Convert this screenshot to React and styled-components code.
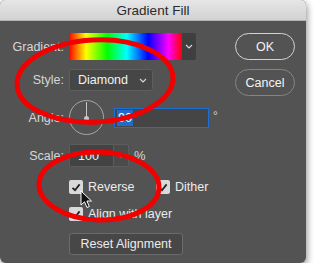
import React from 'react';
import styled, { createGlobalStyle } from 'styled-components';

const GlobalStyle = createGlobalStyle`
  body {
    margin: 0;
    background: #fff;
    font-family: "Liberation Sans", Arial, sans-serif;
  }
`;

function Chevron() {
    return (
        <svg width="8" height="5" viewBox="0 0 8 5">
            <path d="M1 1 L4 4 L7 1" fill="none" stroke="#d8d8d8" strokeWidth="1.1" />
        </svg>
    );
}

function Check() {
    return (
        <svg width="10" height="9" viewBox="0 0 10 9">
            <path d="M1.5 4.8 L4 7.2 L8.6 1.4" fill="none" stroke="#222" strokeWidth="1.8" />
        </svg>
    );
}

export default function App() {
    return (
        <>
            <GlobalStyle />
            <Window>
                <TitleBar>Gradient Fill</TitleBar>
                <Body>
                    <Form>
                        <Row $mt={12} $h={27}>
                            <Label>Gradient:</Label>
                            <GradientPicker>
                                <Swatch />
                                <ArrowPart><Chevron /></ArrowPart>
                            </GradientPicker>
                        </Row>
                        <Row $mt={9} $h={22}>
                            <Label>Style:</Label>
                            <Select>
                                <span>Diamond</span>
                                <Chevron />
                            </Select>
                        </Row>
                        <Row $mt={9} $h={35}>
                            <Label>Angle:</Label>
                            <Inline>
                                <Dial />
                                <AngleInput><Selected>90</Selected></AngleInput>
                                <Degree>°</Degree>
                            </Inline>
                        </Row>
                        <Row $mt={9} $h={23}>
                            <Label>Scale:</Label>
                            <Inline>
                                <ScaleInput>
                                    <ScaleValue>100</ScaleValue>
                                    <ScaleArrow><Chevron /></ScaleArrow>
                                </ScaleInput>
                                <Percent>%</Percent>
                            </Inline>
                        </Row>
                        <Row $mt={13} $h={14}>
                            <span />
                            <Inline>
                                <CheckItem $w={87}>
                                    <Box><Check /></Box>
                                    Reverse
                                </CheckItem>
                                <CheckItem>
                                    <Box><Check /></Box>
                                    Dither
                                </CheckItem>
                            </Inline>
                        </Row>
                        <Row $mt={13} $h={14}>
                            <span />
                            <CheckItem>
                                <Box><Check /></Box>
                                Align with layer
                            </CheckItem>
                        </Row>
                        <Row $mt={12} $h={22}>
                            <span />
                            <ResetButton>Reset Alignment</ResetButton>
                        </Row>
                    </Form>
                    <Buttons>
                        <PillButton $primary>OK</PillButton>
                        <PillButton>Cancel</PillButton>
                    </Buttons>
                </Body>

                <Marks width="306" height="263" viewBox="0 0 306 263">
                    <ellipse cx="95" cy="81" rx="78" ry="41" transform="rotate(-3 95 81)"
                        fill="none" stroke="#f20000" strokeWidth="5" />
                    <ellipse cx="99" cy="186" rx="60" ry="34" transform="rotate(2 99 186)"
                        fill="none" stroke="#f20000" strokeWidth="5" />
                </Marks>
                <Cursor width="13" height="19" viewBox="0 0 13 19">
                    <path d="M1 1 L1 15 L4.5 11.8 L7 17.5 L9.3 16.5 L6.9 11 L11.5 11 Z"
                        fill="#111" stroke="#fff" strokeWidth="1" strokeLinejoin="round" />
                </Cursor>
            </Window>
        </>
    );
}

const Window = styled.div`
    position: relative;
    width: 306px;
    height: 263px;
    background-color: #535353;
    border-radius: 5px 5px 6px 6px;
    box-shadow: 1px 3px 7px rgba(0, 0, 0, 0.45);
    overflow: hidden;
`;

const TitleBar = styled.div`
    height: 21px;
    display: flex;
    justify-content: center;
    align-items: center;
    background: linear-gradient(#e6e6e6, #d2d2d2);
    border-bottom: 1px solid #b4b4b4;
    box-sizing: border-box;
    color: #2a2a2a;
    font-size: 13.5px;
`;

const Body = styled.div`
    display: flex;
    padding-right: 11px;
`;

const Form = styled.div`
    display: flex;
    flex-direction: column;
    flex: 1;
`;

const Row = styled.div`
    display: grid;
    grid-template-columns: 64px auto;
    column-gap: 5px;
    align-items: center;
    justify-items: start;
    height: ${p => p.$h}px;
    margin-top: ${p => p.$mt}px;
`;

const Label = styled.span`
    justify-self: end;
    color: #d6d6d6;
    font-size: 12.5px;
`;

const GradientPicker = styled.div`
    display: flex;
    height: 27px;
    border-radius: 2px;
    overflow: hidden;
`;

const Swatch = styled.div`
    width: 113px;
    background: linear-gradient(to right, #f00 0%, #ff0 15%, #0f0 34%, #0ff 51%, #00f 70%, #f0f 88%, #f00 100%);
`;

const ArrowPart = styled.div`
    width: 14px;
    display: flex;
    justify-content: center;
    align-items: center;
    background-color: #3f3f3f;
`;

const Select = styled.div`
    box-sizing: border-box;
    width: 84px;
    height: 22px;
    display: flex;
    justify-content: space-between;
    align-items: center;
    padding: 0 5px 0 8px;
    background-color: #464646;
    border: 1px solid #5e5e5e;
    border-radius: 3px;
    color: #f2f2f2;
    font-size: 12.5px;
`;

const Inline = styled.div`
    display: flex;
    align-items: center;
`;

const Dial = styled.div`
    position: relative;
    box-sizing: border-box;
    width: 35px;
    height: 35px;
    border: 1px solid #a8a8a8;
    border-radius: 50%;
    &::before {
        content: '';
        position: absolute;
        left: 16px;
        top: 1px;
        width: 1px;
        height: 16px;
        background-color: #c8c8c8;
    }
    &::after {
        content: '';
        position: absolute;
        left: 14px;
        top: 15px;
        width: 5px;
        height: 5px;
        border-radius: 50%;
        background-color: #c8c8c8;
    }
`;

const AngleInput = styled.div`
    box-sizing: border-box;
    width: 95px;
    height: 20px;
    margin-left: 10px;
    padding-left: 2px;
    display: flex;
    align-items: center;
    background-color: #454545;
    border: 1px solid #1b6fd6;
`;

const Selected = styled.span`
    background-color: #1f6ccb;
    color: #fff;
    font-size: 12.5px;
    padding: 1px 1px;
    line-height: 14px;
`;

const Degree = styled.span`
    margin-left: 4px;
    margin-bottom: 3px;
    color: #d6d6d6;
    font-size: 12px;
`;

const Percent = styled.span`
    margin-left: 5px;
    color: #d6d6d6;
    font-size: 13px;
`;

const ScaleInput = styled.div`
    display: flex;
    height: 23px;
    border: 1px solid #5c5c5c;
    border-radius: 2px;
    box-sizing: border-box;
`;

const ScaleValue = styled.div`
    width: 43px;
    padding-left: 8px;
    box-sizing: border-box;
    display: flex;
    align-items: center;
    background-color: #434343;
    color: #f0f0f0;
    font-size: 12.5px;
`;

const ScaleArrow = styled.div`
    width: 14px;
    display: flex;
    justify-content: center;
    align-items: center;
    border-left: 1px solid #5c5c5c;
    background-color: #4b4b4b;
`;

const CheckItem = styled.label`
    display: flex;
    align-items: center;
    gap: 5px;
    width: ${p => p.$w ? `${p.$w}px` : 'auto'};
    color: #ececec;
    font-size: 12.5px;
`;

const Box = styled.span`
    width: 14px;
    height: 14px;
    display: flex;
    justify-content: center;
    align-items: center;
    background-color: #d9d9d9;
    border-radius: 2px;
`;

const ResetButton = styled.button`
    box-sizing: border-box;
    width: 114px;
    height: 22px;
    padding: 0;
    background-color: #474747;
    border: 1px solid #6b6b6b;
    border-radius: 3px;
    color: #ececec;
    font-family: inherit;
    font-size: 12.5px;
`;

const Buttons = styled.div`
    display: flex;
    flex-direction: column;
    gap: 9px;
    padding-top: 12px;
`;

const PillButton = styled.button`
    box-sizing: border-box;
    width: 60px;
    height: 27px;
    padding: 0;
    background: transparent;
    border: 1px solid ${p => p.$primary ? '#d4d4d4' : '#858585'};
    border-radius: 14px;
    color: #f4f4f4;
    font-family: inherit;
    font-size: 12.5px;
`;

const Marks = styled.svg`
    position: absolute;
    left: 0;
    top: 0;
    pointer-events: none;
`;

const Cursor = styled.svg`
    position: absolute;
    left: 80px;
    top: 190px;
`;
